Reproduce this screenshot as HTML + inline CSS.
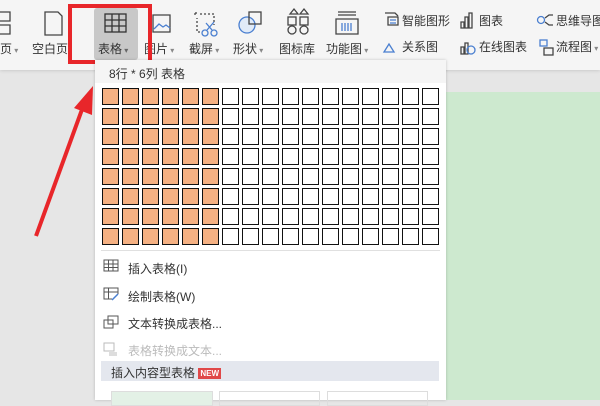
<!DOCTYPE html>
<html><head><meta charset="utf-8"><style>
*{margin:0;padding:0;box-sizing:border-box}
body{width:600px;height:400px;overflow:hidden;background:#e6e6e6;position:relative;font-family:"Liberation Sans","Noto Sans CJK SC",sans-serif;color:#333}
.tb{position:absolute;left:0;top:0;width:600px;height:70px;background:#f5f5f5;box-shadow:0 1px 3px rgba(0,0,0,.12)}
.t{position:absolute;font-size:12px;white-space:nowrap;color:#333}
.green{position:absolute;left:446px;top:92px;width:154px;height:308px;background:#cde9cf}
.menu{position:absolute;left:95px;top:60px;width:351px;height:340px;background:#fff;box-shadow:0 0 3px rgba(0,0,0,.2)}
.hd{position:absolute;left:0;top:0;width:351px;height:23px;background:#f5f5f5;font-size:12px;padding:5px 0 0 14px}
.c{position:absolute;width:17px;height:17px;border:1.5px solid #111;background:#fff}
.c.o{background:#f5b183}
.mi{position:absolute;left:33px;font-size:12px}
.ic{position:absolute;left:8px;width:16px;height:14px}
</style></head><body>
<div class="tb"></div>
<div class="green"></div>
<svg width="600" height="70" style="position:absolute;left:0;top:0">
<g fill="none" stroke="#444" stroke-width="1.3">
<path d="M0 12h10v9h-10M0 25h10v9h-10"/>
<path d="M45 12h13l4 4v19h-17z"/>
<path d="M153 15h17v17h-17z"/><path d="M154 29l5-5 4 3 3-2 4 3" stroke="#4a7fd0"/>
<path d="M196 12v3M194 14h4M200 14h14v11M200 32h-3v-14" stroke-dasharray="2 2"/>
<circle cx="205" cy="33" r="3" stroke="#4a7fd0"/><circle cx="214" cy="33" r="3" stroke="#4a7fd0"/><path d="M207 30l7-8M212 30l-6-7" stroke="#4a7fd0"/>
<circle cx="247" cy="25" r="8" stroke="#4a7fd0" fill="#e1ebf8"/><rect x="249" y="12" width="12" height="12"/>
<path d="M290 14l4-5 4 5zM300 14l4-5 4 5z"/><rect x="288" y="17" width="8" height="8"/><rect x="300" y="17" width="8" height="8"/><circle cx="292" cy="30" r="4"/><circle cx="304" cy="30" r="4"/>
<path d="M338 15h18M336 19h22v15h-22zM338 12h18" /><path d="M342 23v8M345 23v8M348 23v8M351 23v8" stroke="#4a7fd0"/>
<path d="M385 13h10l3 3M388 17h10v8h-10z"/><path d="M390 20h6M390 23h6" stroke="#4a7fd0"/>
<path d="M461 28v-6h3v6zM465 28v-11h3v11zM469 28v-15h3v15z"/>
<circle cx="541" cy="20" r="3.5" stroke="#4a7fd0"/><path d="M545 18l4-3h4M545 22l4 3h4"/>
<path d="M384 52l5-8 5 8z" stroke="#4a7fd0"/>
<path d="M461 54v-7h3v7zM465 54v-11h3v11z"/><circle cx="471" cy="50" r="4" stroke="#4a7fd0"/>
<rect x="540" y="40" width="7" height="6" stroke="#4a7fd0"/><rect x="544" y="48" width="9" height="7"/>
</g>
</svg>
<div style="position:absolute;left:94px;top:8px;width:44px;height:52px;background:#c8c8c8;border-radius:3px"></div>
<svg width="30" height="24" style="position:absolute;left:103px;top:12px"><g fill="none" stroke="#333" stroke-width="1.3"><rect x="2" y="2" width="21" height="18"/><path d="M2 8h21M2 14h21M9 2v18M16 2v18"/></g></svg>
<div class="t" style="left:0;top:40px">页<span style="font-size:8px;color:#888"> ▾</span></div>
<div class="t" style="left:32px;top:40px">空白页<span style="font-size:8px;color:#888">▾</span></div>
<div class="t" style="left:98px;top:40px">表格<span style="font-size:8px;color:#666"> ▾</span></div>
<div class="t" style="left:144px;top:40px">图片<span style="font-size:8px;color:#888"> ▾</span></div>
<div class="t" style="left:189px;top:40px">截屏<span style="font-size:8px;color:#888"> ▾</span></div>
<div class="t" style="left:233px;top:40px">形状<span style="font-size:8px;color:#888"> ▾</span></div>
<div class="t" style="left:279px;top:40px">图标库</div>
<div class="t" style="left:326px;top:40px">功能图<span style="font-size:8px;color:#888"> ▾</span></div>
<div class="t" style="left:402px;top:12px">智能图形</div>
<div class="t" style="left:479px;top:12px">图表</div>
<div class="t" style="left:556px;top:12px">思维导图</div>
<div class="t" style="left:402px;top:38px">关系图</div>
<div class="t" style="left:479px;top:38px">在线图表</div>
<div class="t" style="left:556px;top:38px">流程图<span style="font-size:8px;color:#888"> ▾</span></div>
<div style="position:absolute;left:68px;top:4px;width:84px;height:60px;border:4px solid #e8262a"></div>
<div class="menu">
<div class="hd">8行 * 6列 表格</div>
<div id="g"></div>
<div style="position:absolute;left:6px;top:190px;width:339px;height:1px;background:#e0e0e0"></div>
<svg class="ic" style="top:199px" viewBox="0 0 16 14"><g fill="none" stroke="#555"><rect x="1" y="1" width="14" height="11"/><path d="M1 5h14M1 8.5h14M5.5 1v11M10 1v11"/></g></svg>
<div class="mi" style="top:200px">插入表格(I)</div>
<svg class="ic" style="top:227px" viewBox="0 0 16 14"><g fill="none" stroke="#555"><path d="M9 12H1V1h14v6M1 5h14M5.5 1v11"/><path d="M9 13l6-6" stroke="#4a7fd0" stroke-width="1.5"/></g></svg>
<div class="mi" style="top:228px">绘制表格(W)</div>
<svg class="ic" style="top:255px" viewBox="0 0 16 14"><g fill="none" stroke="#555"><rect x="5" y="1" width="10" height="8"/><rect x="1" y="5" width="9" height="8"/></g></svg>
<div class="mi" style="top:255px">文本转换成表格...</div>
<svg class="ic" style="top:282px" viewBox="0 0 16 14"><g fill="none" stroke="#bbb"><rect x="1" y="1" width="10" height="8"/><path d="M6 11h8M6 13h8"/></g></svg>
<div class="mi" style="top:282px;color:#bbb">表格转换成文本...</div>
<div style="position:absolute;left:6px;top:301px;width:338px;height:20px;background:#e4e7ee;font-size:12px;padding:3px 0 0 10px">插入内容型表格 <span style="display:inline-block;background:#e04848;color:#fff;font-size:8px;font-weight:bold;padding:1px 2px;line-height:9px;vertical-align:1px">NEW</span></div>
<div style="position:absolute;left:16px;top:331px;width:102px;height:15px;border:1px solid #ddd;background:#e3f1e6"></div>
<div style="position:absolute;left:124px;top:331px;width:101px;height:15px;border:1px solid #ddd"></div>
<div style="position:absolute;left:232px;top:331px;width:101px;height:15px;border:1px solid #ddd"></div>
</div>
<svg width="120" height="250" style="position:absolute;left:0;top:0"><path d="M36 236L84 104" stroke="#e8262a" stroke-width="4"/><path d="M93 86L92 115L74 108Z" fill="#e8262a"/></svg>
<script>
var g=document.getElementById('g'),h='';
for(var r=0;r<8;r++)for(var c=0;c<17;c++)h+='<div class="c'+(c<6?' o':'')+'" style="left:'+(7+c*20)+'px;top:'+(28+r*20)+'px"></div>';
g.innerHTML=h;
</script>
</body></html>
